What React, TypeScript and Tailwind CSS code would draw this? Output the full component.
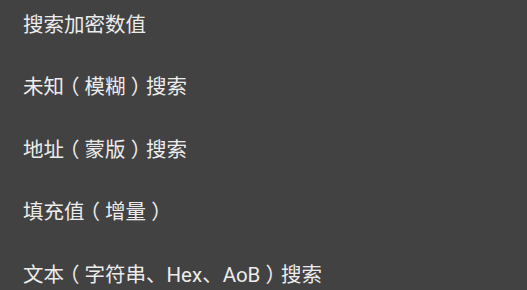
const items = [
  "搜索加密数值",
  "未知（模糊）搜索",
  "地址（蒙版）搜索",
  "填充值（增量）",
  "文本（字符串、Hex、AoB）搜索",
];

// full-width brackets sit centred in their em box in the reference
function Label({ text }: { text: string }) {
  return (
    <>
      {text.split(/([（）])/).map((part, i) =>
        part === "（" || part === "）" ? (
          <span
            key={i}
            className="inline-block w-[1em] text-center [font-feature-settings:'halt']"
          >
            {part}
          </span>
        ) : (
          <span key={i}>{part}</span>
        )
      )}
    </>
  );
}

export default function App() {
  return (
    <div
      className="h-[290px] w-[527px] overflow-hidden bg-[#424242]"
      style={{ fontFamily: 'Roboto, "Noto Sans CJK SC", sans-serif' }}
    >
      <ul className="flex flex-col gap-[34.5px] pt-[10.5px] pl-[23px]">
        {items.map((label) => (
          <li
            key={label}
            className="h-[28px] text-[20.5px] leading-[28px] text-[#ececec] whitespace-nowrap"
          >
            <Label text={label} />
          </li>
        ))}
      </ul>
    </div>
  );
}
